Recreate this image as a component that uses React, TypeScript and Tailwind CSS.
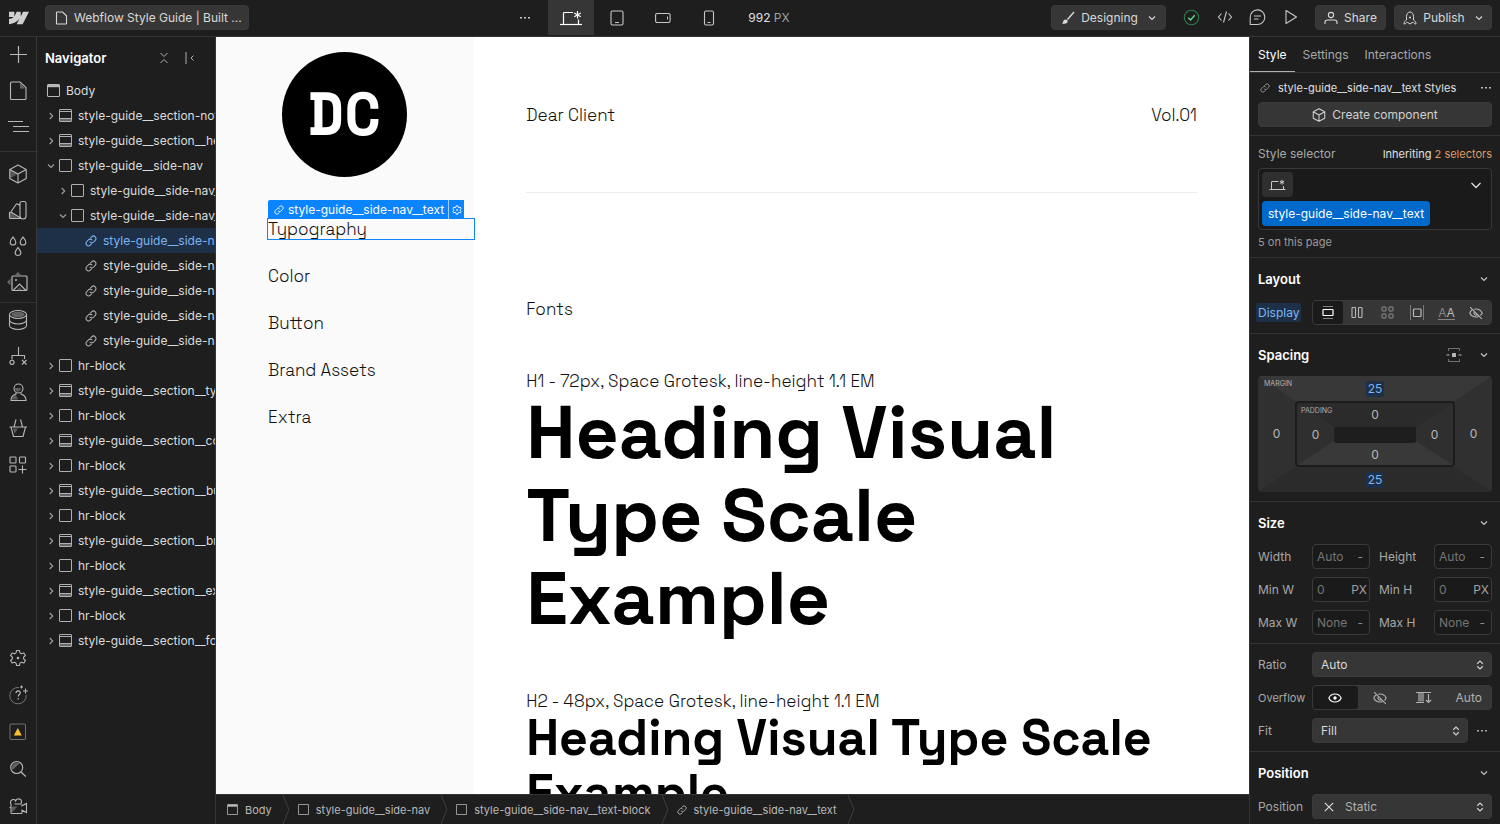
import React from "react";

type IconProps = { w?: number; h?: number; className?: string; children?: React.ReactNode };

function Ico({ w = 16, h, className = "", children }: IconProps) {
  const height = h ?? w;
  return (
    <svg
      width={w}
      height={height}
      viewBox={`0 0 ${w} ${height}`}
      fill="none"
      stroke="currentColor"
      strokeWidth="1"
      className={`shrink-0 ${className}`}
      aria-hidden="true"
    >
      {children}
    </svg>
  );
}

const ChevronDown = ({ className = "" }: { className?: string }) => (
  <Ico w={8} className={className}><path d="M1 2.500 4 5.500 7 2.500" strokeWidth="1.100" /></Ico>
);
const ChevronRight = ({ className = "" }: { className?: string }) => (
  <Ico w={8} className={className}><path d="M2.700 1 5.700 4 2.700 7" strokeWidth="1.100" /></Ico>
);
const Chain = ({ size, className = "" }: { size: number; className?: string }) => (
  <svg width={size} height={size} viewBox="0 0 24 24" fill="none" stroke="currentColor" strokeWidth="2.100" className={`shrink-0 ${className}`} aria-hidden="true">
    <path d="M9.500 13.500a5 5 0 0 0 8 .5l3-3.200a5 5 0 0 0-7.200-7.200L10.500 6.500" />
    <path d="M14.500 10.500a5 5 0 0 0-8-.5l-3 3.200a5 5 0 0 0 7.200 7.200l2.800-2.900" />
  </svg>
);
const LinkIcon = ({ className = "" }: { className?: string }) => <Chain size={12} className={className} />;
const SmallLink = ({ className = "" }: { className?: string }) => <Chain size={10} className={className} />;
const BodyIcon = ({ className = "" }: { className?: string }) => (
  <Ico w={13} className={className}>
    <rect x=".5" y=".5" width="12" height="12" rx=".5" />
    <path d="M1 2h11" strokeWidth="2.400" />
  </Ico>
);
const BlockIcon = ({ className = "" }: { className?: string }) => (
  <Ico w={13} className={className}><rect x=".5" y=".5" width="12" height="12" rx=".5" /></Ico>
);
const SectionIcon = ({ className = "" }: { className?: string }) => (
  <Ico w={13} className={className}>
    <rect x=".5" y=".5" width="12" height="12" rx=".5" />
    <path d="M.5 2.500h12M.5 9.500h12" />
    <path d="M1 10h11v2H1z" fill="currentColor" stroke="none" opacity=".5" />
  </Ico>
);
const DesktopIcon = ({ className = "" }: { className?: string }) => (
  <Ico w={24} h={16} className={className}>
    <path d="M1 14.500h22" strokeWidth="1.200" />
    <path d="M4.500 14V3.500a1 1 0 0 1 1-1H14M19.500 14V9.500" strokeWidth="1.200" />
    <path d="M18.500 1v7.500M15.250 2.900l6.500 3.750M21.750 2.900l-6.500 3.750" strokeWidth="1.200" />
  </Ico>
);
const SmallDesktop = () => (
  <Ico w={17} h={12}>
    <path d="M.5 10.500h16" />
    <path d="M2.500 10V3a.5.5 0 0 1 .5-.5h6.500M14.500 10V7" />
    <path d="M13 .8v4.800M10.900 2l4.200 2.400M15.100 2l-4.200 2.400" />
  </Ico>
);
const CubeIcon = ({ w = 20, shaded = false }: { w?: number; shaded?: boolean }) => (
  <svg width={w} height={w} viewBox="0 0 20 20" fill="none" stroke="currentColor" strokeWidth={w > 16 ? 1.1 : 1.5} strokeLinejoin="round" className="shrink-0" aria-hidden="true">
    {shaded && <path d="M1.800 5.500 10 10l-8.200 4.500z" fill="currentColor" opacity=".35" stroke="none" />}
    <path d="M10 1l8.200 4.400v9.200L10 19l-8.200-4.400V5.400L10 1ZM1.800 5.400 10 10l8.200-4.600M10 10v9" />
  </svg>
);
const EyeOff = () => (
  <Ico w={14}>
    <path d="M3.300 3.800C2 4.700 1.200 5.900.8 7c1 2.200 3.300 4 6.200 4 1 0 1.900-.2 2.700-.6M5.200 3.200C5.800 3.100 6.400 3 7 3c2.900 0 5.200 1.800 6.200 4-.4.900-1 1.700-1.800 2.400" strokeWidth="1.100" />
    <path d="M5.300 5.800a2.100 2.100 0 0 0 2.900 2.900M1.200 1.200l11.600 11.600" strokeWidth="1.100" />
  </Ico>
);
const MoreIcon = ({ className = "" }: { className?: string }) => (
  <Ico w={12} h={4} className={className}>
    <g fill="currentColor" stroke="none"><rect x="1" y="1" width="2" height="1.500" /><rect x="5" y="1" width="2" height="1.500" /><rect x="9" y="1" width="2" height="1.500" /></g>
  </Ico>
);
const UpDown = ({ className = "" }: { className?: string }) => (
  <Ico w={8} h={10} className={className}><path d="M1.200 3.700 4 1l2.800 2.700M1.200 6.300 4 9l2.800-2.700" strokeWidth="1.200" /></Ico>
);
const GearIcon = ({ w = 18 }: { w?: number }) => (
  <svg width={w} height={w} viewBox="0 0 18 18" fill="none" stroke="currentColor" strokeWidth={w > 12 ? 1.1 : 1.7} strokeLinejoin="round" className="shrink-0" aria-hidden="true">
    <path d="M7.600 1.500h2.800l.6 2.400 1.500.9 2.400-.8 1.500 2.500L14.600 8.200v1.600l1.800 1.700-1.500 2.500-2.400-.8-1.500.9-.6 2.400H7.600L7 14.100l-1.500-.9-2.400.8-1.500-2.500L3.400 9.800V8.200L1.600 6.500 3.100 4l2.400.8L7 3.900z" />
    <circle cx="9" cy="9" r=".8" fill="currentColor" />
  </svg>
);

const railTop: { label: string; icon: React.ReactNode }[][] = [
  [
    { label: "Add elements", icon: <Ico w={20}><path d="M10.500 1v17M2 9.500h17" strokeWidth="1.200" /></Ico> },
    {
      label: "Pages",
      icon: (
        <Ico w={20}>
          <path d="M12 2v5.500h5z" fill="currentColor" stroke="none" opacity=".45" />
          <path d="M3.500 1h8.500l6 5.500V17.500a1 1 0 0 1-1 1H3.500a1 1 0 0 1-1-1V2a1 1 0 0 1 1-1z" strokeWidth="1.100" />
        </Ico>
      ),
    },
    { label: "Navigator", icon: <Ico w={22}><path d="M1 5.500h15M6 10.500h16M6 15.500h16" strokeWidth="1.100" /></Ico> },
  ],
  [
    { label: "Components", icon: <CubeIcon shaded /> },
    {
      label: "Variables",
      icon: (
        <Ico w={20}>
          <path d="M2 12l9 6.500H2z" fill="currentColor" stroke="none" opacity=".4" />
          <path d="M12 3.500a2 2 0 0 1 2-2h2a2 2 0 0 1 2 2v12.500a3 3 0 0 1-6 0zM12 5.500 9.500 4a1 1 0 0 0-1.300.3L2.800 12l9.700 6M1.500 12v5.500a1 1 0 0 0 1 1H14" strokeWidth="1.100" />
        </Ico>
      ),
    },
    {
      label: "Style selectors",
      icon: (
        <Ico w={20} h={22}>
          <path d="M5 2C3.500 4 2.200 5.500 2.200 7.200a2.800 2.800 0 0 0 5.600 0C7.800 5.500 6.500 4 5 2ZM15 2c-1.500 2-2.800 3.500-2.800 5.200a2.800 2.800 0 0 0 5.600 0C17.800 5.500 16.500 4 15 2ZM10 12.500c-1.500 2-2.800 3.500-2.800 5.200a2.800 2.800 0 0 0 5.600 0c0-1.700-1.300-3.200-2.800-5.200Z" strokeWidth="1.100" />
        </Ico>
      ),
    },
    {
      label: "Assets",
      icon: (
        <Ico w={22} h={22}>
          <path d="M8 4l3-3 3 3zM3.500 7.500v7L0 11z" fill="currentColor" stroke="none" opacity=".45" />
          <rect x="5" y="5" width="15" height="14.500" rx="1" strokeWidth="1.200" />
          <path d="M6.500 19l6-6 6.500 6.500" strokeWidth="1.100" />
          <path d="M9 19.500l3.500-3.500 3.500 3.500z" fill="currentColor" stroke="none" opacity=".3" />
          <circle cx="9" cy="9" r="1" fill="currentColor" stroke="none" />
        </Ico>
      ),
    },
  ],
  [
    {
      label: "CMS",
      icon: (
        <Ico w={20} h={22}>
          <ellipse cx="10" cy="4.500" rx="8.500" ry="4" strokeWidth="1.100" />
          <ellipse cx="10" cy="4.500" rx="6.500" ry="2.700" fill="currentColor" stroke="none" opacity=".45" />
          <path d="M1.500 4.500v11c0 2.200 3.800 4 8.500 4s8.500-1.800 8.500-4v-11M1.500 10c0 2.200 3.800 4 8.500 4s8.500-1.800 8.500-4" strokeWidth="1.100" />
        </Ico>
      ),
    },
    {
      label: "Logic",
      icon: (
        <Ico w={20}>
          <path d="M10.500 0v8.500M4 12.500v-4h12.500v3.500M14 13l4.500 4.500M18.500 13 14 17.500" strokeWidth="1.100" />
          <circle cx="4" cy="15.300" r="2.100" strokeWidth="1.100" />
        </Ico>
      ),
    },
    {
      label: "Users",
      icon: (
        <Ico w={20}>
          <circle cx="10.500" cy="5.500" r="4.500" strokeWidth="1.100" />
          <path d="M8 9.500V11c-2.500.8-5 3-5 6.500h15c0-3.500-2.500-5.700-5-6.500V9.500" strokeWidth="1.100" />
          <path d="M7 5h6a3.500 3.500 0 0 1-5.500 3zM4 16.500c.3-2.500 2-4 4-4.500l2 4.500z" fill="currentColor" stroke="none" opacity=".4" />
        </Ico>
      ),
    },
    {
      label: "Ecommerce",
      icon: (
        <Ico w={20}>
          <path d="M1.500 8h17.500M3 8l2.500 9.500H15L17.500 8M6 8l2-7.500M14.500 8l-2-7.500" strokeWidth="1.100" strokeLinejoin="round" />
          <path d="M5 9.500h5l-3.500 5z" fill="currentColor" stroke="none" opacity=".4" />
        </Ico>
      ),
    },
    {
      label: "Apps",
      icon: (
        <Ico w={20}>
          <rect x="2" y="2" width="6" height="6" rx=".8" strokeWidth="1.100" />
          <rect x="11.500" y="2" width="6" height="6" rx=".8" strokeWidth="1.100" />
          <rect x="2" y="11" width="6" height="6" rx=".8" strokeWidth="1.100" />
          <path d="M14.500 10.500v8M10.500 14.500h8" strokeWidth="1.100" />
        </Ico>
      ),
    },
  ],
];

const railBottom: { label: string; icon: React.ReactNode }[] = [
  { label: "Settings", icon: <GearIcon /> },
  {
    label: "Help",
    icon: (
      <Ico w={20}>
        <path d="M11 2.500a8.200 8.200 0 1 0 7.200 7.500" opacity=".55" />
        <path d="M8 8c0-1.300.9-2.200 2.200-2.200 1.200 0 2.100.8 2.100 2 0 1.700-2.100 1.800-2.100 3.700M10.200 13v1.500" strokeWidth="1.200" />
        <path d="M13.500.5v3M12 2h3M17.500 3.500v5M15 6h5" />
      </Ico>
    ),
  },
  {
    label: "Audit",
    icon: (
      <Ico w={18}>
        <rect x="1" y="1" width="15.500" height="15.500" rx="1" opacity=".55" />
        <path d="M8.800 5l4 7.500h-8z" fill="#fbc02d" stroke="none" />
      </Ico>
    ),
  },
  {
    label: "Search",
    icon: (
      <Ico w={18}>
        <path d="M3.500 10a5 5 0 0 1 7-6.500z" fill="currentColor" stroke="none" opacity=".45" />
        <circle cx="7.700" cy="7.500" r="6" strokeWidth="1.100" />
        <path d="M12 12l4.800 4.500" strokeWidth="1.200" />
      </Ico>
    ),
  },
  {
    label: "Video tutorials",
    icon: (
      <Ico w={20}>
        <path d="M3 7.500v9.200a.8.800 0 0 0 .8.800h9.400a.8.800 0 0 0 .8-.8v-2.500l4.500 2.300v-9L14 9.800V8.500M3 8a2.800 2.800 0 1 1 4.700-3 3 3 0 1 1 5 3H6.500M1.500 11.500h2" strokeWidth="1.100" />
        <path d="M4 10.500h5.500l-5.500 6z" fill="currentColor" stroke="none" opacity=".4" />
      </Ico>
    ),
  },
];

type Kind = "section" | "block" | "link";
type Node = { label: string; kind: Kind; level: 1 | 2 | 3; open?: boolean; selected?: boolean };
const tree: Node[] = [
  { label: "style-guide__section-note", kind: "section", level: 1 },
  { label: "style-guide__section__header", kind: "section", level: 1 },
  { label: "style-guide__side-nav", kind: "block", level: 1, open: true },
  { label: "style-guide__side-nav__logo", kind: "block", level: 2 },
  { label: "style-guide__side-nav__text-block", kind: "block", level: 2, open: true },
  { label: "style-guide__side-nav__text", kind: "link", level: 3, selected: true },
  { label: "style-guide__side-nav__text", kind: "link", level: 3 },
  { label: "style-guide__side-nav__text", kind: "link", level: 3 },
  { label: "style-guide__side-nav__text", kind: "link", level: 3 },
  { label: "style-guide__side-nav__text", kind: "link", level: 3 },
  { label: "hr-block", kind: "block", level: 1 },
  { label: "style-guide__section__typography", kind: "section", level: 1 },
  { label: "hr-block", kind: "block", level: 1 },
  { label: "style-guide__section__color", kind: "section", level: 1 },
  { label: "hr-block", kind: "block", level: 1 },
  { label: "style-guide__section__button", kind: "section", level: 1 },
  { label: "hr-block", kind: "block", level: 1 },
  { label: "style-guide__section__brand", kind: "section", level: 1 },
  { label: "hr-block", kind: "block", level: 1 },
  { label: "style-guide__section__extra", kind: "section", level: 1 },
  { label: "hr-block", kind: "block", level: 1 },
  { label: "style-guide__section__footer", kind: "section", level: 1 },
];
const indent = { 1: "pl-2.5", 2: "pl-[22px]", 3: "pl-12" } as const;
const railGroup = ["pb-1.5", "border-t border-[#343434] pt-1 pb-0.5", "border-t border-[#343434]"];

function TopBar() {
  const btn = "flex h-[25px] items-center rounded border border-[#3a3a3a] bg-[#363636] text-[#d9d9d9]";
  return (
    <header className="flex h-[37px] shrink-0 items-center justify-between border-b border-[#343434] pr-2 pb-px">
      <div className="flex items-center">
        <button aria-label="Webflow menu" className="flex w-[37px] justify-center text-[#d0d0d0]">
          <svg width="20" height="20" viewBox="0 0 24 24" fill="currentColor" aria-hidden="true">
            <path d="m24 4.515-7.658 14.970H9.149l3.205-6.204h-.144C9.566 16.713 5.621 18.973 0 19.485v-6.118s3.596-.213 5.710-2.435H0V4.515h6.417v5.278l.144-.001 2.622-5.277h4.854v5.244h.144l2.720-5.244H24Z" />
          </svg>
        </button>
        <button className={`${btn} ml-2 w-[204px] gap-1.5 pl-2`}>
          <Ico w={14}><path d="M2.500 1.500A.5.5 0 0 1 3 1h5.500l4 3.800V12.500a.5.5 0 0 1-.5.5H3a.5.5 0 0 1-.5-.5z" strokeWidth="1.100" /></Ico>
          <span className="truncate">Webflow Style Guide | Built ...</span>
        </button>
      </div>

      <div className="flex h-full items-center pr-2 text-[#c8c8c8]">
        <button aria-label="More breakpoints" className="flex h-full w-[46px] items-center justify-center"><MoreIcon /></button>
        <button aria-label="Desktop" className="flex h-full w-[46px] items-center justify-center bg-[#363636] text-white"><DesktopIcon /></button>
        <button aria-label="Tablet" className="flex h-full w-[46px] items-center justify-center">
          <Ico w={14} h={16}><rect x="1" y="1" width="12" height="14" rx="1.500" strokeWidth="1.100" /><path d="M5 12.500h4" /></Ico>
        </button>
        <button aria-label="Mobile landscape" className="flex h-full w-[46px] items-center justify-center">
          <Ico w={16} h={12}><rect x=".6" y="1.500" width="14.500" height="9" rx="1.500" strokeWidth="1.100" /><path d="M12.500 4.500v3" /></Ico>
        </button>
        <button aria-label="Mobile portrait" className="flex h-full w-[46px] items-center justify-center">
          <Ico w={12} h={16}><rect x="1.500" y="1" width="9" height="14" rx="1.500" strokeWidth="1.100" /><path d="M4.500 12.500h3" /></Ico>
        </button>
        <span className="ml-4 text-[#e0e0e0]">992 <span className="text-[#a0a0a0]">PX</span></span>
      </div>

      <div className="flex items-center text-[#c8c8c8]">
        <button className={`${btn} w-[115px] justify-center gap-1.5`}>
          <Ico w={14}>
            <path d="M13 1 6.500 8.500" strokeWidth="1.400" />
            <path d="M1 12.800c1-.5.900-2.500 2-3.700 1-1 2.700-.8 3.400.1.700 1.100.1 2.400-1.100 3-1.200.6-2.800.7-4.300.6z" fill="currentColor" stroke="none" />
          </Ico>
          <span>Designing</span>
          <ChevronDown className="ml-1" />
        </button>
        <div className="mr-2 ml-[9px] flex">
          <button aria-label="Saved" className="flex w-[33px] justify-center">
            <Ico w={17}><circle cx="8.500" cy="8.500" r="7.200" stroke="#2f7d4f" strokeWidth="1.100" /><path d="M5.300 8.700l2.300 2.200 4.100-4.600" stroke="#5fdc8c" strokeWidth="1.400" /></Ico>
          </button>
          <button aria-label="Export code" className="flex w-[33px] justify-center">
            <Ico w={16}><path d="M4.500 4.500 1.500 8l3 3.500M11.500 4.500l3 3.500-3 3.500M9.500 2.500l-3 11" strokeWidth="1.100" /></Ico>
          </button>
          <button aria-label="Comments" className="flex w-[33px] justify-center">
            <Ico w={17}><path d="M1.200 15.500V8.500a7.300 7.300 0 1 1 7.300 7zM5 7h7M5 10h4.500" strokeWidth="1.100" /></Ico>
          </button>
          <button aria-label="Preview" className="flex w-[33px] justify-center">
            <Ico w={16}><path d="M3 1.500 13.500 8 3 14.500z" strokeWidth="1.100" strokeLinejoin="round" /></Ico>
          </button>
        </div>
        <button className={`${btn} w-[71px] justify-center gap-1.5`}>
          <Ico w={14}><circle cx="7" cy="4" r="2.600" strokeWidth="1.100" /><path d="M1 13v-1.500c0-1.400 1-2.500 2.500-2.500h7c1.500 0 2.500 1.100 2.500 2.500V13" strokeWidth="1.100" /></Ico>
          <span>Share</span>
        </button>
        <button className={`${btn} ml-2 w-[98px] justify-center gap-1.5`}>
          <Ico w={14}>
            <path d="M3.500 9V5.500C3.500 3 5 1 7 1s3.500 2 3.500 4.500V9c1.500.8 2.500 2.200 2.500 4-1.200 0-2-.6-2.700-1.500h-1.100L7 13l-2.200-1.500H3.700C3 12.400 2.200 13 1 13c0-1.800 1-3.200 2.500-4Z" strokeLinejoin="round" />
            <circle cx="7" cy="6.500" r="1" fill="currentColor" stroke="none" />
          </Ico>
          <span>Publish</span>
          <ChevronDown className="ml-1" />
        </button>
      </div>
    </header>
  );
}

function Rail() {
  return (
    <nav aria-label="Tools" className="flex w-[37px] shrink-0 flex-col justify-between border-r border-[#383838] text-[#b8b8b8]">
      <div>
        {railTop.map((group, i) => (
          <div key={i} className={railGroup[i]}>
            {group.map((item) => (
              <button key={item.label} aria-label={item.label} className="flex h-9 w-full items-center justify-center">{item.icon}</button>
            ))}
          </div>
        ))}
      </div>
      <div className="flex flex-col gap-px">
        {railBottom.map((item) => (
          <button key={item.label} aria-label={item.label} className="flex h-9 w-full items-center justify-center">{item.icon}</button>
        ))}
      </div>
    </nav>
  );
}

function Navigator() {
  return (
    <aside className="w-[178px] shrink-0 overflow-hidden text-[#dcdcdc]">
      <div className="flex h-[41px] items-center pl-2">
        <h2 className="flex-1 text-[13px] font-semibold text-white">Navigator</h2>
        <button aria-label="Collapse all" className="text-[#b0b0b0]">
          <Ico w={10} h={12}><path d="M1.500 1 5 4.500 8.500 1M1.500 11 5 7.500 8.500 11" /></Ico>
        </button>
        <button aria-label="Close panel" className="mr-5 ml-4 text-[#b0b0b0]">
          <Ico w={10} h={12}><path d="M1 0v12" /><path d="M8.500 3.500 6 6l2.500 2.500" /></Ico>
        </button>
      </div>
      <div className="flex h-[25px] items-center gap-1.5 pl-2.5"><BodyIcon className="text-[#b8b8b8]" />Body</div>
      <ul>
        {tree.map((n, i) => (
          <li key={i} className={`flex h-[25px] items-center ${indent[n.level]} ${n.selected ? "bg-[#1e3048] text-[#7db5f2]" : ""}`}>
            {n.kind !== "link" && (
              <button aria-label={n.open ? "Collapse" : "Expand"} className="mr-1 text-[#a0a0a0]">{n.open ? <ChevronDown /> : <ChevronRight />}</button>
            )}
            {n.kind === "section" && <SectionIcon className="text-[#b0b0b0]" />}
            {n.kind === "block" && <BlockIcon className="text-[#b0b0b0]" />}
            {n.kind === "link" && <LinkIcon className={n.selected ? "text-[#7db5f2]" : "text-[#b0b0b0]"} />}
            <span className="ml-1.5 whitespace-nowrap">{n.label}</span>
          </li>
        ))}
      </ul>
    </aside>
  );
}

function Canvas() {
  return (
    <div className="flex min-h-0 flex-1 overflow-hidden bg-white font-['Space_Grotesk','Inter',sans-serif] text-[17px] leading-5 font-light text-[#111]">
      <div className="w-1/4 shrink-0 bg-[#fafafa] pt-[15px] pl-[52px]">
        <div className="ml-3.5 flex h-[125px] w-[125px] items-center justify-center rounded-full bg-black pb-1 font-['Space_Mono','Liberation_Mono',monospace] text-[60px] leading-none font-bold text-white">
          DC
        </div>
        <nav aria-label="Style guide" className="mt-[42px] flex flex-col gap-[27px]">
          <a href="#typography" className="relative block outline-1 outline-[#1084ff]">
            Typography
            <span className="absolute bottom-full left-0 flex h-[19px] items-center rounded-tl-xs bg-[#0a84ff] font-['Inter',sans-serif] text-[12px] leading-none font-normal whitespace-nowrap text-white">
              <SmallLink className="mr-1 ml-1.5" />
              <span className="pr-1">style-guide__side-nav__text</span>
              <span className="flex h-full w-4 items-center justify-center border-l border-white/60"><GearIcon w={10} /></span>
            </span>
          </a>
          <a href="#color">Color</a>
          <a href="#button">Button</a>
          <a href="#brand-assets">Brand Assets</a>
          <a href="#extra">Extra</a>
        </nav>
      </div>
      <main className="min-w-0 flex-1 px-[52px] pt-[68px]">
        <div className="flex justify-between border-b border-[#ececec] pb-[67px]">
          <span>Dear Client</span>
          <span>Vol.01</span>
        </div>
        <p className="mt-[106px]">Fonts</p>
        <p className="mt-[52px]">H1 - 72px, Space Grotesk, line-height 1.1 EM</p>
        <h1 className="text-[75px] leading-[83px] font-semibold text-black">Heading Visual<br />Type Scale<br />Example</h1>
        <p className="mt-[51px]">H2 - 48px, Space Grotesk, line-height 1.1 EM</p>
        <h2 className="text-[50px] leading-[55px] font-semibold text-black">Heading Visual Type Scale Example</h2>
      </main>
    </div>
  );
}

function Crumbs() {
  const sep = <Ico w={8} h={29} className="text-[#3f3f3f]"><path d="M1 0 7 14.500 1 29" /></Ico>;
  const items = [
    { label: "Body", icon: <BodyIcon className="h-[11px] w-[11px]" /> },
    { label: "style-guide__side-nav", icon: <BlockIcon className="h-[11px] w-[11px]" /> },
    { label: "style-guide__side-nav__text-block", icon: <BlockIcon className="h-[11px] w-[11px]" /> },
    { label: "style-guide__side-nav__text", icon: <SmallLink /> },
  ];
  return (
    <nav aria-label="Breadcrumb" className="flex h-[30px] shrink-0 items-center border-t border-[#343434] text-[11px] text-[#b8b8b8]">
      {items.map((it, i) => (
        <React.Fragment key={it.label}>
          <button className={`flex items-center gap-[7px] pr-2.5 ${i === 0 ? "pl-[11px]" : "pl-2"}`}>{it.icon}{it.label}</button>
          {sep}
        </React.Fragment>
      ))}
    </nav>
  );
}

function SectionHead({ title, extra }: { title: string; extra?: React.ReactNode }) {
  return (
    <div className="flex h-[42px] items-center">
      <h3 className="flex-1 text-[13px] font-semibold text-white">{title}</h3>
      {extra}
      <button aria-label={`Toggle ${title}`} className="flex w-4 justify-center text-[#c8c8c8]"><ChevronDown /></button>
    </div>
  );
}

function SizeField({ id, label, value, unit }: { id: string; label: string; value: string; unit: string }) {
  return (
    <>
      <label htmlFor={id}>{label}</label>
      <div className="flex h-[25px] items-center rounded border border-[#3a3a3a] bg-[#1a1a1a] pr-0.5 pl-1">
        <input id={id} placeholder={value} className="w-0 min-w-0 flex-1 bg-transparent outline-none placeholder:text-[#757575]" />
        <button aria-label={`${label} unit`} className={unit === "PX" ? "text-[#a0a0a0]" : "px-1 text-[#8a8a8a]"}>{unit}</button>
      </div>
    </>
  );
}

function SpaceValue({ v, on, label }: { v: string; on?: boolean; label: string }) {
  return (
    <button aria-label={label} className={on ? "rounded-xs bg-[#1e3048] px-0.5 leading-4 text-[#7db5f2]" : "leading-4"}>{v}</button>
  );
}

function SpacingBox() {
  return (
    <div className="relative grid h-[116px] grid-cols-[37px_1fr_37px] grid-rows-[25px_1fr_25px] overflow-hidden rounded bg-[#303030] text-[#b8b8b8]">
      <svg className="absolute inset-0 h-full w-full" viewBox="0 0 233 116" preserveAspectRatio="none" aria-hidden="true">
        <path d="M0 0h233l-37 25H37z" fill="#383838" />
        <path d="M0 116h233l-37-25H37z" fill="#2b2b2b" />
      </svg>
      <span className="absolute top-1 left-1.5 text-[7px] leading-2 text-[#b0b0b0]">MARGIN</span>
      <div className="relative col-span-3 flex items-center justify-center"><SpaceValue label="Margin top" v="25" on /></div>
      <div className="relative flex items-center justify-center"><SpaceValue label="Margin left" v="0" /></div>
      <div className="relative grid grid-cols-[37px_1fr_37px] grid-rows-[24px_1fr_24px] overflow-hidden rounded border-2 border-[#1c1c1c] bg-[#2f2f2f]">
        <svg className="absolute inset-0 h-full w-full" viewBox="0 0 155 62" preserveAspectRatio="none" aria-hidden="true">
          <path d="M0 0h155l-37 24H37z" fill="#2b2b2b" />
          <path d="M0 62h155l-37-24H37z" fill="#393939" />
        </svg>
        <span className="absolute top-1 left-1 text-[7px] leading-2 text-[#b0b0b0]">PADDING</span>
        <div className="relative col-span-3 flex items-center justify-center"><SpaceValue label="Padding top" v="0" /></div>
        <div className="relative flex items-center justify-center"><SpaceValue label="Padding left" v="0" /></div>
        <div className="relative rounded-xs bg-[#1e1e1e]" />
        <div className="relative flex items-center justify-center"><SpaceValue label="Padding right" v="0" /></div>
        <div className="relative col-span-3 flex items-center justify-center"><SpaceValue label="Padding bottom" v="0" /></div>
      </div>
      <div className="relative flex items-center justify-center"><SpaceValue label="Margin right" v="0" /></div>
      <div className="relative col-span-3 flex items-center justify-center"><SpaceValue label="Margin bottom" v="25" on /></div>
    </div>
  );
}

const selectCls = "h-[25px] w-full appearance-none rounded border border-[#3a3a3a] bg-[#363636] text-[#d9d9d9] outline-none";

function StylePanel() {
  const displays: { label: string; icon: React.ReactNode }[] = [
    { label: "Block", icon: <Ico w={12} h={13}><path d="M1 .5h10M1 12.500h10" opacity=".45" /><rect x="1" y="3.500" width="10" height="6" rx=".5" strokeWidth="1.200" /></Ico> },
    { label: "Flex", icon: <Ico w={12} h={13}><rect x="1" y="1.500" width="3.500" height="10" rx=".5" strokeWidth="1.100" /><rect x="7.500" y="1.500" width="3.500" height="10" rx=".5" strokeWidth="1.100" /></Ico> },
    { label: "Grid", icon: <Ico w={13} h={13} className="opacity-70"><rect x="1" y="1" width="4" height="4" rx=".5" /><rect x="8" y="1" width="4" height="4" rx=".5" /><rect x="1" y="8" width="4" height="4" rx=".5" /><rect x="8" y="8" width="4" height="4" rx=".5" /></Ico> },
    { label: "Inline block", icon: <Ico w={16} h={15}><path d="M1.500 0v15M14.500 0v15" opacity=".5" /><rect x="4.500" y="4" width="7.500" height="7.500" rx=".5" strokeWidth="1.200" /></Ico> },
    { label: "Inline", icon: <span className="flex border-b border-[#858585] text-[12px] leading-[13px]"><span className="text-[#858585]">A</span>A</span> },
    { label: "None", icon: <EyeOff /> },
  ];
  return (
    <aside className="w-[251px] shrink-0 overflow-hidden border-l border-[#343434] text-[#a8a8a8]">
      <div role="tablist" className="flex h-9 border-b border-[#343434]">
        <button role="tab" aria-selected="true" className="border-b border-[#b0b0b0] px-2 pt-px text-white">Style</button>
        <button role="tab" aria-selected="false" className="border-b border-transparent px-2 pt-px">Settings</button>
        <button role="tab" aria-selected="false" className="border-b border-transparent px-2 pt-px">Interactions</button>
      </div>

      <section className="border-b border-[#343434] px-2 pb-2">
        <div className="flex h-[29px] items-center text-[11px] text-[#e0e0e0]">
          <SmallLink className="mr-2 ml-0.5 text-[#a0a0a0]" />
          <span className="flex-1">style-guide__side-nav__text Styles</span>
          <button aria-label="More"><MoreIcon className="text-[#b8b8b8]" /></button>
        </div>
        <button className="flex h-[25px] w-full items-center justify-center gap-1.5 rounded border border-[#3a3a3a] bg-[#363636] text-[#d0d0d0]">
          <CubeIcon w={14} />Create component
        </button>
      </section>

      <section className="border-b border-[#343434] px-2">
        <div className="flex h-8 items-center justify-between pt-1">
          <span>Style selector</span>
          <span className="text-[11px] text-[#e0e0e0]">Inheriting <a href="#selectors" className="text-[#dc9b67]">2 selectors</a></span>
        </div>
        <div className="flex flex-col items-start gap-1 rounded border border-[#383838] bg-[#1a1a1a] p-[3px]">
          <div className="flex w-full items-center justify-between">
            <button aria-label="Breakpoint" className="flex h-[25px] w-[31px] items-center justify-center rounded bg-[#2f2f2f] text-[#c8c8c8]"><SmallDesktop /></button>
            <button aria-label="Open selector list" className="mr-1.5 text-[#e0e0e0]"><Ico w={12}><path d="M1.500 4 6 8.500 10.500 4" strokeWidth="1.300" /></Ico></button>
          </div>
          <button className="h-[25px] rounded bg-[#006acc] px-1.5 text-white">style-guide__side-nav__text</button>
        </div>
        <p className="mb-[3px] flex h-6 items-center text-[11px] text-[#9a9a9a]">5 on this page</p>
      </section>

      <section className="border-b border-[#343434] px-2 pb-2">
        <SectionHead title="Layout" />
        <div className="grid grid-cols-[54px_1fr] items-center">
          <span><span className="-ml-0.5 rounded-xs bg-[#1e3048] px-0.5 py-0.5 text-[#7db5f2]">Display</span></span>
          <div className="grid h-[25px] grid-cols-6 rounded border border-[#3a3a3a] bg-[#363636] text-[#b8b8b8]">
            {displays.map((d, i) => (
              <button key={d.label} aria-label={d.label} aria-pressed={i === 0} className={`flex items-center justify-center ${i === 0 ? "rounded-[3px] bg-[#1a1a1a] text-white" : ""}`}>{d.icon}</button>
            ))}
          </div>
        </div>
      </section>

      <section className="border-b border-[#343434] px-2 pb-[9px]">
        <SectionHead
          title="Spacing"
          extra={
            <button aria-label="Spacing mode" className="mr-3.5 text-[#b8b8b8]">
              <Ico w={16}>
                <path d="M2.500 4V1.500h11V4M2.500 12v2.500h11V12" opacity=".55" />
                <path d="M.5 8h3M12.500 8h3" strokeWidth="1.200" />
                <rect x="6" y="6" width="4" height="4" rx=".5" fill="currentColor" stroke="none" />
              </Ico>
            </button>
          }
        />
        <SpacingBox />
      </section>

      <section className="border-b border-[#343434] px-2 pb-2">
        <SectionHead title="Size" />
        <div className="grid grid-cols-[54px_58px_1fr_58px] items-center gap-y-2 [&>label:nth-of-type(even)]:pl-[9px]">
          <SizeField id="w" label="Width" value="Auto" unit="-" />
          <SizeField id="h" label="Height" value="Auto" unit="-" />
          <SizeField id="minw" label="Min W" value="0" unit="PX" />
          <SizeField id="minh" label="Min H" value="0" unit="PX" />
          <SizeField id="maxw" label="Max W" value="None" unit="-" />
          <SizeField id="maxh" label="Max H" value="None" unit="-" />
        </div>
      </section>

      <section className="border-b border-[#343434] px-2 py-2">
        <div className="grid grid-cols-[54px_1fr] items-center gap-y-2">
          <label htmlFor="ratio">Ratio</label>
          <div className="relative">
            <select id="ratio" className={`${selectCls} pl-2`}><option>Auto</option></select>
            <UpDown className="pointer-events-none absolute top-2 right-2 text-[#d0d0d0]" />
          </div>
          <span className="text-[11px]">Overflow</span>
          <div className="grid h-[25px] grid-cols-4 rounded border border-[#3a3a3a] bg-[#363636] text-[#b0b0b0]">
            <button aria-label="Visible" aria-pressed="true" className="flex items-center justify-center rounded-[3px] bg-[#1a1a1a] text-white">
              <Ico w={14}><path d="M.8 7C1.800 4.800 4.100 3 7 3s5.200 1.800 6.200 4c-1 2.200-3.300 4-6.200 4S1.800 9.200.8 7Z" strokeWidth="1.100" /><circle cx="7" cy="7" r="1.700" fill="currentColor" stroke="none" /></Ico>
            </button>
            <button aria-label="Hidden" className="flex items-center justify-center"><EyeOff /></button>
            <button aria-label="Scroll" className="flex items-center justify-center">
              <Ico w={16} h={13}><rect x="2" y="1.500" width="6" height="9" fill="currentColor" stroke="none" opacity=".6" /><path d="M0 1.500h15M0 11.500h8M12.500 3v8.500M10 9l2.500 2.500L15 9" strokeWidth="1.200" /></Ico>
            </button>
            <button className="flex items-center justify-center">Auto</button>
          </div>
          <label htmlFor="fit">Fit</label>
          <div className="flex items-center gap-1">
            <div className="relative flex-1">
              <select id="fit" className={`${selectCls} pl-2`}><option>Fill</option></select>
              <UpDown className="pointer-events-none absolute top-2 right-2 text-[#d0d0d0]" />
            </div>
            <button aria-label="More fit options" className="flex w-5 justify-center"><MoreIcon /></button>
          </div>
        </div>
      </section>

      <section className="px-2">
        <SectionHead title="Position" />
        <div className="grid grid-cols-[54px_1fr] items-center">
          <label htmlFor="position">Position</label>
          <div className="relative">
            <Ico w={10} className="pointer-events-none absolute top-2 left-3 text-[#e0e0e0]"><path d="M.8.8l8.400 8.400M9.200.8.8 9.200" strokeWidth="1.100" /></Ico>
            <select id="position" className={`${selectCls} pl-8 !text-[#b0b0b0]`}><option>Static</option></select>
            <UpDown className="pointer-events-none absolute top-2 right-2 text-[#d0d0d0]" />
          </div>
        </div>
      </section>
    </aside>
  );
}

export default function App() {
  return (
    <div className="flex h-screen flex-col overflow-hidden bg-[#1e1e1e] font-['Inter',sans-serif] text-[12px] leading-4 text-[#dcdcdc]">
      <TopBar />
      <div className="flex min-h-0 flex-1">
        <Rail />
        <Navigator />
        <div className="flex min-w-0 flex-1 flex-col border-l border-[#343434]">
          <Canvas />
          <Crumbs />
        </div>
        <StylePanel />
      </div>
    </div>
  );
}
